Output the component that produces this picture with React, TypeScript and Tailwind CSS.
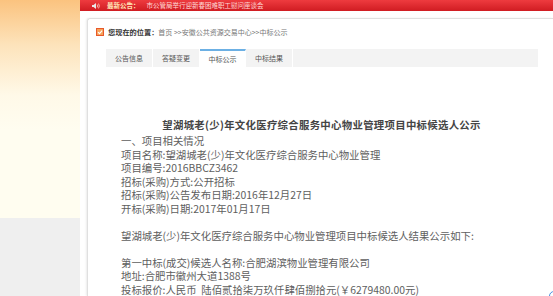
import React from "react";

const F = "font-['Noto_Sans_CJK_SC','Noto_Sans',sans-serif]";

function Speaker() {
  return (
    <svg width="10" height="8" viewBox="0 0 10 8" className="shrink-0">
      <path d="M1 3h1.5L5 1v6L2.5 5H1z" fill="#e9e9e9" />
      <path d="M6.3 2.6q0.9 1.4 0 2.8" stroke="#ffd2c0" strokeWidth="0.8" fill="none" />
      <path d="M7.5 1.6q1.7 2.4 0 4.8" stroke="#ffd2c0" strokeWidth="0.8" fill="none" />
    </svg>
  );
}

function CrumbIcon() {
  return (
    <svg width="8" height="8" viewBox="0 0 8 8" className="shrink-0">
      <rect x="0" y="0" width="8" height="8" fill="#e8592a" />
      <rect x="1" y="1" width="6" height="6" fill="#f6a25a" />
      <path d="M2 4.2l1.5 1.4 2.6-3" stroke="#fff" strokeWidth="1.1" fill="none" />
    </svg>
  );
}

const tabs = ["公告信息", "答疑变更", "中标公示", "中标结果"];

const lines: string[] = [
  "一、项目相关情况",
  "项目名称:望湖城老(少)年文化医疗综合服务中心物业管理",
  "项目编号:2016BBCZ3462",
  "招标(采购)方式:公开招标",
  "招标(采购)公告发布日期:2016年12月27日",
  "开标(采购)日期:2017年01月17日",
  "",
  "望湖城老(少)年文化医疗综合服务中心物业管理项目中标候选人结果公示如下:",
  "",
  "第一中标(成交)候选人名称:合肥湖滨物业管理有限公司",
  "地址:合肥市徽州大道1388号",
  "投标报价:人民币  陆佰贰拾柒万玖仟肆佰捌拾元(￥6279480.00元)",
];

export default function App() {
  return (
    <div className={`relative w-[553px] h-[296px] overflow-hidden bg-white flex ${F}`}>
      <div className="w-[80px] shrink-0 flex flex-col">
        <div className="h-[218px] bg-[linear-gradient(to_bottom,#fbc37f_0px,#fde3bb_45px,#fff9e8_95px,#fffdf0_130px,#fffdf0_218px)]" />
        <div className="flex-1 bg-[#efefef]" />
      </div>
      <div className="flex-1 flex flex-col min-w-0">
        <div className="h-[11px] shrink-0 bg-[linear-gradient(to_bottom,#ee3b3f,#d01c22)] flex items-center pl-[11px] gap-[5px] text-[6.5px] leading-none">
          <Speaker />
          <span className="font-bold text-[#ffe6b8] ml-[1px]">最新公告：</span>
          <span className="text-[#ffd9d6] ml-[2px]">市公管局举行迎新春困难职工慰问座谈会</span>
        </div>
        <div className="flex-1 pl-[7px] pt-[7px] flex flex-col">
          <div className="flex-1 border-l border-t border-[#e0e0e0] rounded-tl-[3px] shadow-[-1px_0_2px_rgba(0,0,0,0.08)] flex flex-col">
            <div className="h-[25px] flex items-center pl-[8px] pt-[1px]">
              <CrumbIcon />
              <span className="ml-[4px] text-[7.2px] font-bold text-[#333]">您现在的位置：</span>
              <span className="text-[7px] text-[#777]">首页 &gt;&gt;安徽公共资源交易中心&gt;&gt;中标公示</span>
            </div>
            <div className="ml-[18px] mt-[5px] w-[432px] h-[18px] bg-[#f3f3f3] flex">
              {tabs.map((t, i) => (
                <div
                  key={t}
                  className={
                    i === 2
                      ? "w-[46px] bg-white border-t-2 border-t-[#6cb0e4] border-r border-r-white flex items-center justify-center text-[7px] text-[#555]"
                      : "w-[47px] border-r border-r-white flex items-center justify-center text-[7px] text-[#555]"
                  }
                >
                  {t}
                </div>
              ))}
            </div>
            <div className="mt-[50px] text-center text-[10.4px] leading-[16px] font-bold tracking-[0.3px] text-[#444] pl-[2px]">
              望湖城老(少)年文化医疗综合服务中心物业管理项目中标候选人公示
            </div>
            <div className="mt-[1px] pl-[33px] text-[10.4px] leading-[13.5px] text-[#5e5e5e] whitespace-pre">
              {lines.map((l, i) => (
                <div key={i} className="h-[13.5px]">
                  {l}
                </div>
              ))}
            </div>
          </div>
        </div>
      </div>
      <div className="absolute right-[-6px] bottom-[-5px] w-[10px] h-[10px] rounded-full border border-[#4a8fe0] bg-white" />
    </div>
  );
}
